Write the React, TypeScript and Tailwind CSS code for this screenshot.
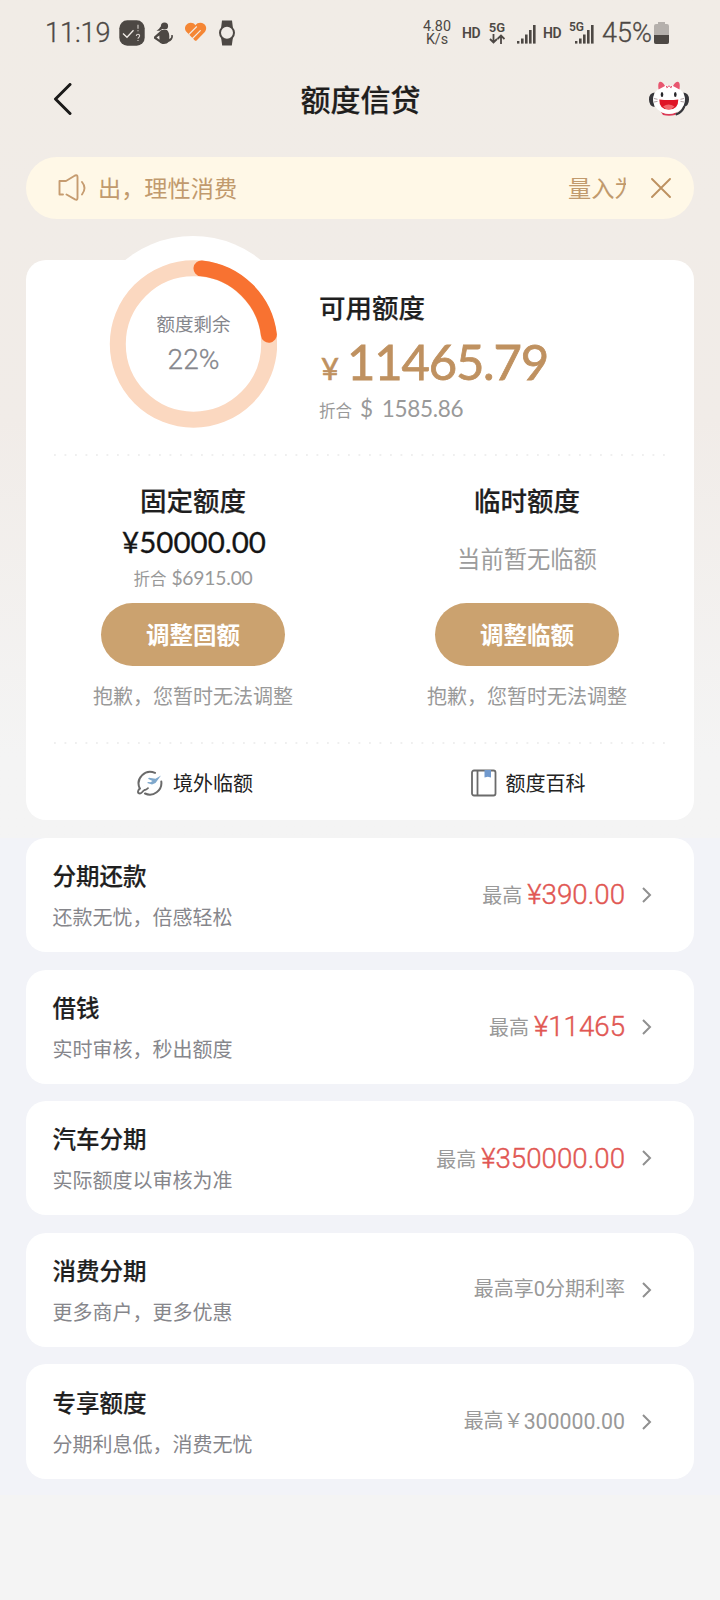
import React from "react";

type Product = {
  title: string;
  desc: string;
  label: string;
  amount?: string;
  note?: string;
};

const products: Product[] = [
  { title: "分期还款", desc: "还款无忧，倍感轻松", label: "最高", amount: "¥390.00" },
  { title: "借钱", desc: "实时审核，秒出额度", label: "最高", amount: "¥11465" },
  { title: "汽车分期", desc: "实际额度以审核为准", label: "最高", amount: "¥350000.00" },
  { title: "消费分期", desc: "更多商户，更多优惠", label: "最高享0分期利率" },
  { title: "专享额度", desc: "分期利息低，消费无忧", label: "最高￥", note: "300000.00" },
];

const SignalBars = () => (
  <svg width="19" height="19" viewBox="0 0 19 19" fill="#4d4844">
    <rect x="0" y="16" width="2.4" height="2.6" />
    <rect x="4" y="13.5" width="2.6" height="5.1" />
    <rect x="8" y="9.5" width="2.6" height="9.1" />
    <rect x="12" y="5" width="2.6" height="13.6" />
    <rect x="16" y="0" width="2.6" height="18.6" />
  </svg>
);

const StatusBar = () => (
  <div className="flex h-16 items-center pl-[45px] pr-[51px] font-[Roboto] text-[#4d4844]">
    <span className="w-[74px] pt-[2px] text-[27px] font-light leading-none [-webkit-text-stroke:0.300px]">11:19</span>
    <svg className="mt-[2px]" width="26" height="26" viewBox="0 0 26 26" fill="none">
      <rect x="0.3" y="0.3" width="25.4" height="25.4" rx="8" fill="#4d4844" />
      <path d="M4 13.5l4 3.8 6.500-7" stroke="#f1ece7" strokeWidth="1.3" />
      <path d="M19 4.800v4M19 10.300v1" stroke="#d8d2cd" strokeWidth="1.1" />
      <path d="M17.300 16c.2-2.300 3.400-2.200 3.300 0 0 1.300-1.600 1.300-1.600 2.800M19 20v1.100" stroke="#d8d2cd" strokeWidth="1.1" />
    </svg>
    <svg className="ml-[9px] mt-[2px]" width="20" height="23" viewBox="0 0 20 23" fill="#4d4844">
      <circle cx="10.500" cy="4" r="3.600" />
      <path d="M8 3.500C5.500 5 6 7 2.500 8.500c2.500.8 4.500 0 6-2z" />
      <path d="M7.500 8h5.500c2 2 2.700 5 2.200 9 2-1 2.200-2 2-4l1.800.3c.2 3.500-1.500 5.500-4.500 6.700-1.500 2.600-7.500 2.600-9 .2L0 16.500v-1.800z" />
      <path d="M5.300 13.500l-2.800 2.100 3 2.200z" fill="#f1ece7" />
    </svg>
    <svg className="ml-[10px]" width="23" height="20" viewBox="0 0 23 20" fill="none">
      <path d="M11.300 3.200C9.500.5 6 .2 3.500 1.800.5 4 .2 7.500 2.600 10l8 8.300q1.100 1 2.200 0l7.800-8.100C23 7.600 22.600 4 20 2c-2.700-2-6.500-1.700-8.700 1.200z" fill="#f58634" />
      <path d="M4.800 12.500L12.800 4.500" stroke="#f1ece7" strokeWidth="1.100" />
      <path d="M8.500 16.500l7.800-7.800" stroke="#f1ece7" strokeWidth="1.200" strokeLinecap="round" />
    </svg>
    <svg className="ml-[11px] mt-px" width="18" height="26" viewBox="0 0 18 26">
      <path d="M4 .5h10l1 8H3zM3 17h12l-1.200 8.500H4.200z" fill="#4d4844" />
      <circle cx="9" cy="12.800" r="7" fill="#f1ece7" stroke="#4d4844" strokeWidth="2" />
    </svg>
    <div className="ml-auto flex items-center">
      <div className="flex w-[30px] flex-col items-center pt-px text-[14.300px] leading-[13px]">
        <span>4.80</span>
        <span>K/s</span>
      </div>
      <span className="ml-[10px] w-[19px] pt-px text-[14px] font-semibold leading-none tracking-[-0.300px]">HD</span>
      <div className="ml-[8px] flex w-4 flex-col items-center pt-[2px]">
        <span className="text-[13px] font-semibold leading-[12px]">5G</span>
        <svg width="16" height="10" viewBox="0 0 16 10" fill="none" stroke="#4d4844" strokeWidth="1.800">
          <path d="M4.500 0v8.500M1 5l3.500 3.500L8 5M12 10V1.500M8.500 5L12 1.500 15.500 5" />
        </svg>
      </div>
      <span className="ml-3 mt-1">
        <SignalBars />
      </span>
      <span className="ml-[7px] w-[19px] pt-px text-[14px] font-semibold leading-none tracking-[-0.300px]">HD</span>
      <div className="relative ml-[13px] mt-1">
        <SignalBars />
        <span className="absolute -left-[6px] -top-[4px] text-[12px] font-semibold leading-none">5G</span>
      </div>
      <span className="ml-[8px] w-[50px] pt-[2px] text-[27px] font-light leading-none [-webkit-text-stroke:0.300px]">45%</span>
      <svg className="ml-[2px] mt-[2px]" width="15" height="22" viewBox="0 0 15 22">
        <path d="M4 0h7v2h2a2 2 0 012 2v16a2 2 0 01-2 2H2a2 2 0 01-2-2V4a2 2 0 012-2h2z" fill="#b5b0ac" />
        <path d="M0 13h15v7a2 2 0 01-2 2H2a2 2 0 01-2-2z" fill="#4d4844" />
      </svg>
    </div>
  </div>
);

const CatIcon = () => (
  <svg width="40" height="36" viewBox="0 0 40 36">
    <path d="M5.500 11.500Q0 12 0 18.500T5.500 26zM34.500 11.500q5.500.5 5.500 7T34.500 26z" fill="#37373b" />
    <path d="M12 31q8 4 16 0l-2 3q-6 1.500-12 0z" fill="#dc3b57" />
    <ellipse cx="20" cy="18.500" rx="16" ry="14.300" fill="#fff" />
    <path d="M9.500 8.500Q8.500 1.500 11 .8 13.500.5 16 5zM30.500 8.500q1-7-1.500-7.700Q26.500.5 24 5z" fill="#e8566f" />
    <path d="M35 26q-2 5-7.500 7.300" stroke="#37373b" strokeWidth="2.200" fill="none" strokeLinecap="round" />
    <path d="M10.300 18.500q9.500 1.200 19 0Q29.500 28.500 19.800 28.500T10.300 18.500z" fill="#df1527" />
    <path d="M14 25.500q5.500-4 11.500 0-2.500 3-5.800 3t-5.700-3z" fill="#f2656b" />
    <ellipse cx="13" cy="13.500" rx="1.300" ry="2.500" fill="#27272b" />
    <ellipse cx="26.300" cy="13.500" rx="1.300" ry="2.500" fill="#27272b" />
    <path d="M17.500 5l.9 2M22.500 5l-.9 2M20 4.500v1.500" stroke="#e54866" strokeWidth="1.300" />
    <path d="M5 17.500l3.500.8M5 21l3.500-.6M35 17.500l-3.500.8M35 21l-3.500-.6" stroke="#99888b" strokeWidth=".8" />
  </svg>
);

const Header = () => (
  <div className="flex h-[70px] items-center justify-between pl-[52px] pr-[31px]">
    <svg width="20" height="32" viewBox="0 0 20 32" fill="none" stroke="#1b1a19" strokeWidth="3" strokeLinecap="round" strokeLinejoin="round">
      <path d="M18 1.500L3.500 16 18 30.500" />
    </svg>
    <h1 className="-mt-[3px] text-[30px] font-medium leading-none text-[#1f1e1d] [-webkit-text-stroke:0.200px]">额度信贷</h1>
    <CatIcon />
  </div>
);

const Notice = () => (
  <div className="mx-[26px] mt-[23px] flex h-[62px] items-center rounded-full bg-[#fff8e7] pl-[32px] pr-[23px] text-[23.200px] text-[#c19a6d]">
    <svg width="29" height="28" viewBox="0 0 29 28" fill="none" stroke="#c69c70" strokeWidth="1.900" strokeLinecap="round" strokeLinejoin="round">
      <path d="M5 20.500H1.500V7H8L17 1.500Q19.500.5 19.500 3V24q0 2.500-2.500 1.300L8.500 20.500" />
      <path d="M24 8q5 6 0 12.500" />
    </svg>
    <div className="-mt-[2px] ml-[11px] flex flex-1 justify-between overflow-hidden whitespace-nowrap">
      <span>出，理性消费</span>
      <span className="mr-[17px] w-[58px] overflow-hidden">量入为</span>
    </div>
    <svg className="ml-2" width="20" height="20" viewBox="0 0 20 20" fill="none" stroke="#bd9160" strokeWidth="1.900" strokeLinecap="round">
      <path d="M1 1l18 18M19 1L1 19" />
    </svg>
  </div>
);

const QuotaRing = () => (
  <div className="relative h-[168px] w-[168px]">
    <div className="absolute -left-6 -top-6 h-[216px] w-[216px] rounded-full bg-white" />
    <svg className="absolute inset-0" width="168" height="168" viewBox="0 0 168 168" fill="none">
      <circle cx="84.500" cy="84" r="75.700" stroke="#fbd8c0" strokeWidth="16" />
      <path d="M92.500 8.400A76 76 0 01159.900 74.700" stroke="#f87231" strokeWidth="16" strokeLinecap="round" />
    </svg>
    <div className="relative flex h-full flex-col items-center pl-px pt-[51px] text-[#85868c]">
      <span className="text-[18.500px] leading-[24px]">额度剩余</span>
      <span className="mt-[9px] font-[Roboto] text-[28px] font-light leading-[32px] [-webkit-text-stroke:0.300px]">22%</span>
    </div>
  </div>
);

const DottedLine = () => (
  <svg className="mx-[26px] block" width="616" height="2">
    <path d="M2 1h612" stroke="#efefef" strokeWidth="1.800" strokeDasharray="1.800 8.700" />
  </svg>
);

const QuotaButton = ({ children }: { children: string }) => (
  <button className="h-[63px] w-[184px] rounded-full bg-[#cba26f] text-[23.500px] font-bold leading-none text-white">
    {children}
  </button>
);

const QuotaCard = () => (
  <div className="mx-[26px] mt-[41px] h-[560px] rounded-[20px] bg-white">
    <div className="flex h-[194px] items-start">
      <div className="ml-[83px]">
        <QuotaRing />
      </div>
      <div className="relative ml-[42px] pt-[31px]">
        <h2 className="text-[26.500px] font-medium leading-[32px] text-[#1f1f1f] [-webkit-text-stroke:0.200px]">可用额度</h2>
        <div className="mt-[13px] flex items-baseline font-[Lato] leading-[50px] text-[#bf9160] [font-kerning:none]">
          <span className="w-[28px] pl-[2px] text-[31px] [-webkit-text-stroke:0.600px]">¥</span>
          <span className="text-[49px] tracking-[-1.200px] [-webkit-text-stroke:0.800px]">11465.79</span>
        </div>
        <div className="-mt-[4px] flex items-baseline leading-[40px] text-[#999]">
          <span className="text-[16.500px]">折合</span>
          <span className="ml-2 flex gap-[9px] font-[Lato] text-[22.500px] tracking-[-0.300px] [font-kerning:none]">
            <span>$</span>
            <span>1585.86</span>
          </span>
        </div>
      </div>
    </div>

    <DottedLine />

    <div className="grid h-[286px] grid-cols-2">
      <div className="flex flex-col items-center pt-[28px]">
        <h3 className="text-[26.500px] font-medium leading-[32px] text-[#1f1f1f] [-webkit-text-stroke:0.200px]">固定额度</h3>
        <p className="mt-[8px] pl-[2px] font-[Lato] text-[29.500px] leading-[36px] text-[#151515] [-webkit-text-stroke:0.300px]">¥50000.00</p>
        <p className="mt-[5px] flex items-baseline leading-[26px] text-[#999]">
          <span className="text-[16.500px]">折合</span>
          <span className="ml-[5px] font-[Lato] text-[19.300px] tracking-[-0.200px]">$6915.00</span>
        </p>
        <div className="mt-[12px]">
          <QuotaButton>调整固额</QuotaButton>
        </div>
        <p className="mt-[15px] text-[20px] leading-[30px] text-[#999]">抱歉，您暂时无法调整</p>
      </div>
      <div className="flex flex-col items-center pt-[28px]">
        <h3 className="text-[26.500px] font-medium leading-[32px] text-[#1f1f1f] [-webkit-text-stroke:0.200px]">临时额度</h3>
        <p className="mt-[25px] text-[23.300px] leading-[34px] text-[#9c9c9c]">当前暂无临额</p>
        <div className="mt-[28px]">
          <QuotaButton>调整临额</QuotaButton>
        </div>
        <p className="mt-[15px] text-[20px] leading-[30px] text-[#999]">抱歉，您暂时无法调整</p>
      </div>
    </div>

    <DottedLine />

    <div className="grid h-[78px] grid-cols-2 pl-[2px] text-[20px] text-[#222]">
      <div className="flex items-center justify-center gap-[10px]">
        <svg width="27" height="26" viewBox="0 0 27 26" fill="none" strokeLinecap="round">
          <path d="M19 2.900A11.600 11.600 0 003.800 18.500M25.300 11.500A11.600 11.600 0 019 23.500" stroke="#6a6a6a" strokeWidth="2" />
          <path d="M3.800 18.500c-2.400 2.200-2.600 5 .2 5 2.200 0 2.500-2.600 4.500-3.500 1.500.2 2.500-.8 3.500-1.800" stroke="#6a6a6a" strokeWidth="1.800" />
          <path d="M25 5.500l-5.500 3.200-6.500-1-1 1 4.500 2.300-2 1.300-2.500-.3-.8 1 4.800 1.500 3.500-1.500z" fill="#7fa8cc" />
        </svg>
        <span>境外临额</span>
      </div>
      <div className="flex items-center justify-center gap-[9px]">
        <svg width="27" height="28" viewBox="0 0 27 28" fill="none" stroke="#6b6b6b" strokeWidth="1.800">
          <rect x="2" y="1.500" width="23.500" height="25" rx="2" />
          <path d="M7.500 1.500v25" />
          <path d="M14.500 1h6.500v7.500l-3.200-.8-3.300.8z" fill="#7199cd" stroke="none" />
        </svg>
        <span>额度百科</span>
      </div>
    </div>
  </div>
);

const ProductRow = ({ title, desc, label, amount, note }: Product) => (
  <div className="flex h-[114.300px] items-center justify-between rounded-[20px] bg-white pl-[26.500px] pr-[42px]">
    <div className="pt-px">
      <h3 className="text-[23.500px] font-medium leading-[34px] text-[#1f1f1f] [-webkit-text-stroke:0.200px]">{title}</h3>
      <p className="mt-[9px] text-[20px] leading-[32px] text-[#86868b]">{desc}</p>
    </div>
    <div className="flex items-center">
      <div className="flex items-baseline font-[Roboto,'Noto_Sans_CJK_SC',sans-serif]">
        <span className="relative -top-px text-[20px] text-[#999]">{label}</span>
        {note && <span className="text-[21.300px] text-[#999]">{note}</span>}
        {amount && (
          <span className="ml-[5px] text-[27.700px] font-light text-[#e15753] [-webkit-text-stroke:0.400px]">{amount}</span>
        )}
      </div>
      <svg className="ml-[17px]" width="10" height="16" viewBox="0 0 10 16" fill="none" stroke="#909090" strokeWidth="2">
        <path d="M1 1l7 7-7 7" />
      </svg>
    </div>
  </div>
);

const App = () => {
  return (
    <div className="h-[1600px] w-[720px] overflow-hidden bg-[#f4f4f4] font-['Noto_Sans_CJK_SC',sans-serif]">
      <div className="h-[838px] bg-linear-to-b from-[#f1ece6] from-0% via-[#f1ece8] via-50% to-[#f4f4f4] to-90%">
        <StatusBar />
        <Header />
        <Notice />
        <QuotaCard />
      </div>
      <div className="flex h-[657px] flex-col gap-[17.300px] bg-[#f2f3f8] px-[26px]">
        {products.map((item) => (
          <ProductRow key={item.title} {...item} />
        ))}
      </div>
    </div>
  );
};

export default App;
